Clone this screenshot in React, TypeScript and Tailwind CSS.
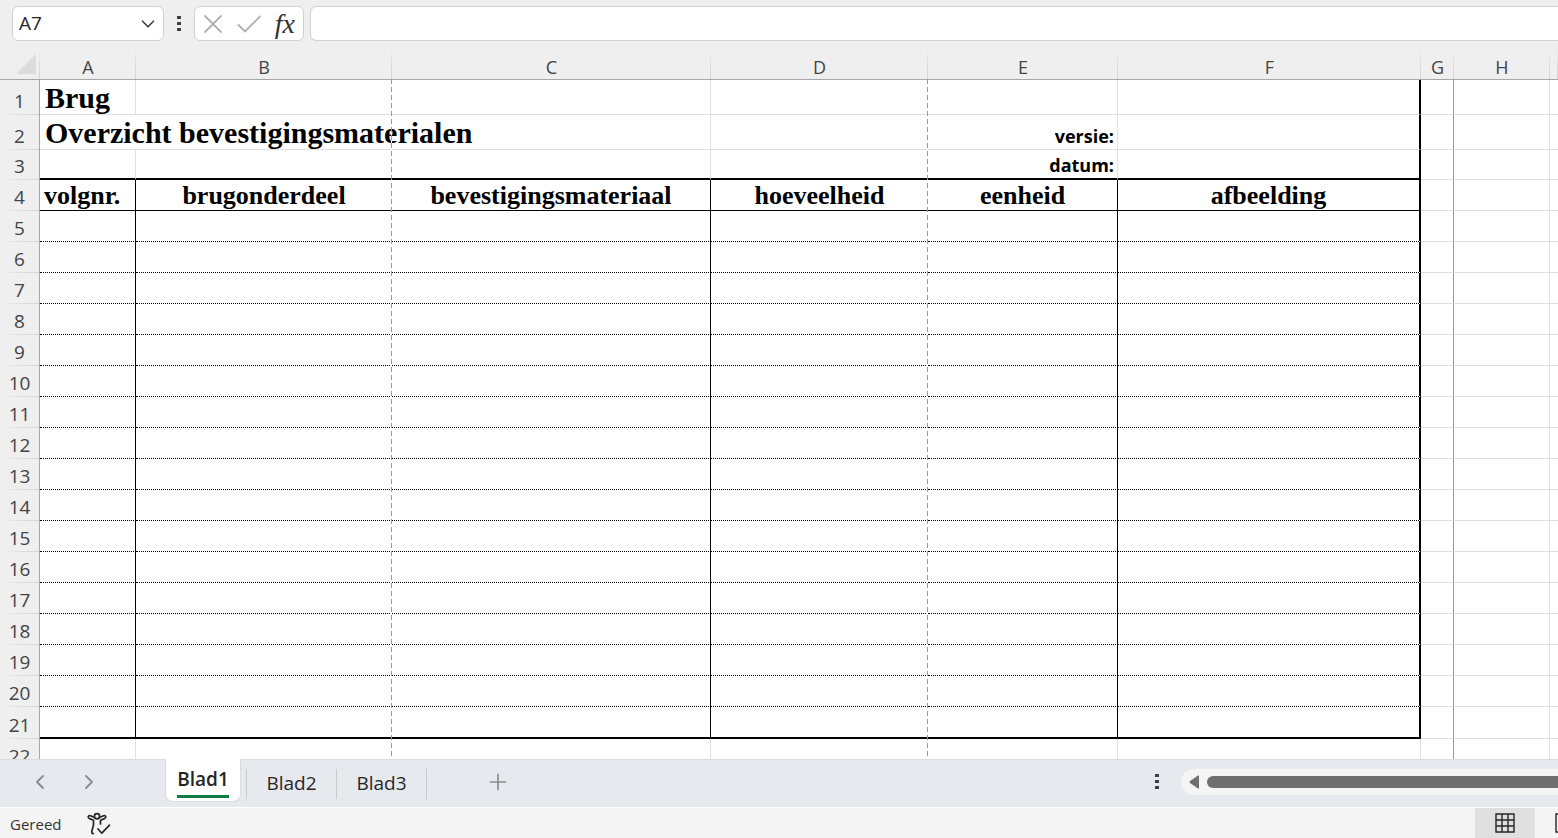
import { ChevronDown, ChevronLeft, ChevronRight, Plus } from "lucide-react";

const columns = ["A", "B", "C", "D", "E", "F", "G", "H", ""];

const headings = ["volgnr.", "brugonderdeel", "bevestigingsmateriaal", "hoeveelheid", "eenheid", "afbeelding"];

const emptyRows = [5, 6, 7, 8, 9, 10, 11, 12, 13, 14, 15, 16, 17, 18, 19, 20, 21];

// right hand borders per column, outside and inside the framed list
const plainSides = [
  "border-r border-r-[#e0e0e0]",
  "",
  "border-r border-r-[#e0e0e0]",
  "",
  "border-r border-r-[#e0e0e0]",
  "border-r-2 border-r-black",
];

const listSides = [
  "border-r border-r-black",
  "",
  "border-r border-r-black",
  "",
  "border-r border-r-black",
  "border-r-2 border-r-black",
];

const Dots = () => (
  <svg width="4" height="16" viewBox="0 0 4 16" fill="#404040">
    <rect width="4" height="3" y="0" />
    <rect width="4" height="3" y="6" />
    <rect width="4" height="3" y="12" />
  </svg>
);

const FormulaBar = () => {
  return (
    <div className="flex h-12 shrink-0 items-start pl-3 pt-1.5">
      <div className="flex h-[35px] w-[152px] items-center rounded-md border border-[#d1d1d1] bg-white pl-1.5 pr-1">
        <input aria-label="Naamvak" defaultValue="A7" className="w-full min-w-0 text-[19px] text-[#262626] outline-none" />
        <button aria-label="Naamvak openen">
          <ChevronDown size={22} strokeWidth={1.8} color="#404040" />
        </button>
      </div>
      <div className="flex h-[35px] w-[30px] items-center justify-center">
        <Dots />
      </div>
      <div className="flex h-[35px] w-[110px] items-center justify-between rounded-md border border-[#d1d1d1] bg-white px-2">
        <button aria-label="Annuleren">
          <svg width="20" height="20" viewBox="0 0 20 20" fill="none" stroke="#b0b0b0" strokeWidth="1.8">
            <path d="M1.500 1.500L18.500 18.500M18.500 1.500L1.500 18.500" />
          </svg>
        </button>
        <button aria-label="Invoeren">
          <svg width="24" height="20" viewBox="0 0 24 20" fill="none" stroke="#b0b0b0" strokeWidth="1.8">
            <path d="M1 10.500L8 17.500L23.500 2" />
          </svg>
        </button>
        <button aria-label="Functie invoegen" className="font-['Liberation_Serif',serif] text-[28px] leading-7 font-medium text-[#303030] italic">
          fx
        </button>
      </div>
      <input aria-label="Formulebalk" className="ml-1.5 h-[35px] min-w-0 flex-1 rounded-l-md border border-r-0 border-[#d1d1d1] bg-white px-2 text-[19px] outline-none" />
    </div>
  );
};

const RowNumber = ({ n }: { n: number }) => (
  <th
    scope="row"
    className="border-r border-r-[#a6a6a6] bg-[#efefef] bg-[linear-gradient(to_right,transparent,#d0d0d0)] bg-[length:100%_1px] bg-bottom bg-no-repeat p-0 pb-0.5 text-center align-bottom text-[19px] leading-6 font-normal text-[#444]"
  >
    {n}
  </th>
);

const RestCells = ({ line = true }: { line?: boolean }) => {
  const bottom = line ? "border-b border-b-[#e0e0e0]" : "";
  return (
    <>
      <td className={`border-r border-r-[#999] ${bottom}`}></td>
      <td className={`border-r border-r-[#e0e0e0] ${bottom}`}></td>
      <td className={bottom}></td>
    </>
  );
};

const Sheet = () => {
  return (
    <div className="min-h-0 flex-1 overflow-hidden bg-white">
      <table className="w-full table-fixed border-separate border-spacing-0">
        <colgroup>
          <col className="w-10" />
          <col className="w-24" />
          <col className="w-64" />
          <col className="w-[319px]" />
          <col className="w-[217px]" />
          <col className="w-[190px]" />
          <col className="w-[303px]" />
          <col className="w-[33px]" />
          <col className="w-24" />
          <col />
        </colgroup>
        <thead>
          <tr className="h-8 bg-[#efefef]">
            <td className="border-b border-b-[#a6a6a6] bg-[linear-gradient(to_bottom,transparent,#d0d0d0)] bg-[length:1px_100%] bg-right bg-no-repeat p-0">
              <svg className="ml-4" width="20" height="20" viewBox="0 0 20 20">
                <path d="M20 0V20H0Z" fill="#dcdcdc" />
              </svg>
            </td>
            {columns.map((name) => (
              <th
                key={name}
                scope="col"
                className="relative border-b border-b-[#a6a6a6] bg-[linear-gradient(to_bottom,transparent,#d0d0d0)] bg-[length:1px_100%] bg-right bg-no-repeat p-0 pt-1.5 text-lg leading-6 font-normal text-[#444]"
              >
                {name}
                {/* page break */}
                {(name === "B" || name === "D") && (
                  <span className="absolute top-full right-0 h-screen w-px bg-[repeating-linear-gradient(to_bottom,#999_0px,#999_5px,#fff_5px,#fff_8px)]"></span>
                )}
              </th>
            ))}
          </tr>
        </thead>
        <tbody>
          <tr className="h-[35px]">
            <RowNumber n={1} />
            {plainSides.map((side, i) => (
              <td key={i} className={`border-b border-b-[#e0e0e0] p-0 align-bottom ${side}`}>
                {i === 0 && <div className="pl-[5px] font-['Liberation_Serif',serif] text-[30px] leading-8 font-bold">Brug</div>}
              </td>
            ))}
            <RestCells />
          </tr>
          <tr className="h-[35px]">
            <RowNumber n={2} />
            <td colSpan={3} className="border-r border-b border-[#e0e0e0] p-0 align-bottom">
              <div className="pl-[5px] font-['Liberation_Serif',serif] text-[30px] leading-8 font-bold whitespace-nowrap">Overzicht bevestigingsmaterialen</div>
            </td>
            <td className="border-b border-b-[#e0e0e0]"></td>
            <td className="border-r border-b border-[#e0e0e0] p-0 pr-[3px] pb-px text-right align-bottom text-lg leading-6 font-bold">versie:</td>
            <td className="border-r-2 border-b border-r-black border-b-[#e0e0e0]"></td>
            <RestCells />
          </tr>
          <tr className="h-[30px]">
            <RowNumber n={3} />
            {plainSides.map((side, i) => (
              <td key={i} className={`border-b-2 border-b-black p-0 pr-[3px] pb-px text-right align-bottom text-lg leading-6 font-bold ${side}`}>
                {i === 4 && "datum:"}
              </td>
            ))}
            <RestCells />
          </tr>
          <tr className="h-[31px]">
            <RowNumber n={4} />
            {headings.map((text, i) => (
              <td
                key={text}
                className={`border-b border-b-black p-0 align-bottom font-['Liberation_Serif',serif] text-[26px] leading-7 font-bold ${i === 0 ? "pl-1 text-left" : "text-center"} ${listSides[i]}`}
              >
                {text}
              </td>
            ))}
            <RestCells />
          </tr>
          {emptyRows.map((n) => (
            <tr key={n} className={n === 21 ? "h-8" : "h-[31px]"}>
              <RowNumber n={n} />
              {listSides.map((side, i) => (
                <td
                  key={i}
                  className={`${n === 21 ? "border-b-2 border-b-black" : "[border-bottom-style:dotted] border-b border-b-black"} ${side}`}
                ></td>
              ))}
              <RestCells />
            </tr>
          ))}
          <tr className="h-[31px]">
            <RowNumber n={22} />
            {plainSides.map((side, i) => (
              <td key={i} className={i === 5 ? "border-r border-r-[#e0e0e0]" : side}></td>
            ))}
            <RestCells line={false} />
          </tr>
        </tbody>
      </table>
    </div>
  );
};

const SheetTabs = () => {
  return (
    <div className="flex h-12 shrink-0 bg-[#e6eaef]">
      <div className="flex w-[165px] items-center gap-[25px] border-t border-[#dcdcdc] pb-1 pl-7 text-[#8a8a8a]">
        <button aria-label="Vorige bladen">
          <ChevronLeft size={24} strokeWidth={1.8} />
        </button>
        <button aria-label="Volgende bladen">
          <ChevronRight size={24} strokeWidth={1.8} />
        </button>
      </div>
      <button className="flex h-[43px] w-[76px] items-start justify-center rounded-b-lg border-x border-b border-[#dcdcdc] bg-white pt-2 text-[19px] leading-6 font-semibold text-[#262626]">
        <span className="flex flex-col border-b-3 border-[#107c41] pb-1">Blad1</span>
      </button>
      <div className="flex min-w-0 flex-1 items-center border-t border-[#dcdcdc] pl-[5px]">
        <button className="h-[30px] w-[91px] border-x border-[#cacaca] text-[19px] text-[#262626]">Blad2</button>
        <button className="h-[30px] w-[90px] border-r border-[#cacaca] text-[19px] text-[#262626]">Blad3</button>
        <button aria-label="Nieuw blad" className="mb-1 ml-[58px] text-[#8a8a8a]">
          <Plus size={26} strokeWidth={1.5} />
        </button>
      </div>
      <div className="flex w-[403px] items-center border-t border-[#dcdcdc] pb-1">
        <Dots />
        <div className="ml-[22px] flex h-[26px] flex-1 items-center rounded-l-full bg-[#f5f5f5] pl-2">
          <button aria-label="Naar links schuiven">
            <svg width="10" height="14" viewBox="0 0 10 14" fill="#707070">
              <path d="M10 1V13Q10 14 9 13.500L1 8Q0 7 1 6L9 .5Q10 0 10 1Z" />
            </svg>
          </button>
          <div className="ml-2 h-3 flex-1 rounded-l-full bg-[#707070]"></div>
        </div>
      </div>
    </div>
  );
};

const StatusBar = () => {
  return (
    <div className="flex h-[31px] shrink-0 items-stretch justify-between border-t border-white bg-[#f4f4f4]">
      <div className="flex items-center gap-[26px] pt-0.5 pl-2.5 text-[15px] text-[#333]">
        <span>Gereed</span>
        <button aria-label="Toegankelijkheid">
          <svg width="24" height="24" viewBox="0 0 24 24" fill="none" stroke="#262626" strokeWidth="1.7" strokeLinecap="round" strokeLinejoin="round">
            <circle cx="10" cy="4.200" r="2.600" />
            <path d="M7.500 5.500L3.500 3.800Q1.500 3.300 1.200 5Q1.200 6 2.500 6.600L6.500 8.300V13L4.800 19.500Q4.500 21.500 6.300 21.700" />
            <path d="M12.500 5.500L16.500 3.800Q18.500 3.300 18.800 5Q18.800 6 17.500 6.600L13.500 8.300V12" />
            <path d="M11 17L14.800 21.200L22.500 13.200" />
          </svg>
        </button>
      </div>
      <div className="flex w-[83px] overflow-hidden">
        <button aria-label="Normaal" className="flex w-[60px] shrink-0 items-center justify-center bg-[#e0e0e0]">
          <svg width="20" height="20" viewBox="0 0 20 20" fill="none" stroke="#262626" strokeWidth="1.4">
            <path d="M1 1H19V19H1ZM7 1V19M13 1V19M1 7H19M1 13H19" />
          </svg>
        </button>
        <button aria-label="Pagina-indeling" className="flex w-[60px] shrink-0 items-center justify-center">
          <svg width="20" height="20" viewBox="0 0 20 20" fill="none" stroke="#262626" strokeWidth="1.4">
            <path d="M1 1H19V19H1ZM5 5H15V15H5Z" />
          </svg>
        </button>
      </div>
    </div>
  );
};

const App = () => {
  return (
    <div className="flex h-screen flex-col overflow-hidden bg-[#efefef] font-['Open_Sans','Noto_Sans',sans-serif] text-black">
      <FormulaBar />
      <Sheet />
      <SheetTabs />
      <StatusBar />
    </div>
  );
};

export default App;
